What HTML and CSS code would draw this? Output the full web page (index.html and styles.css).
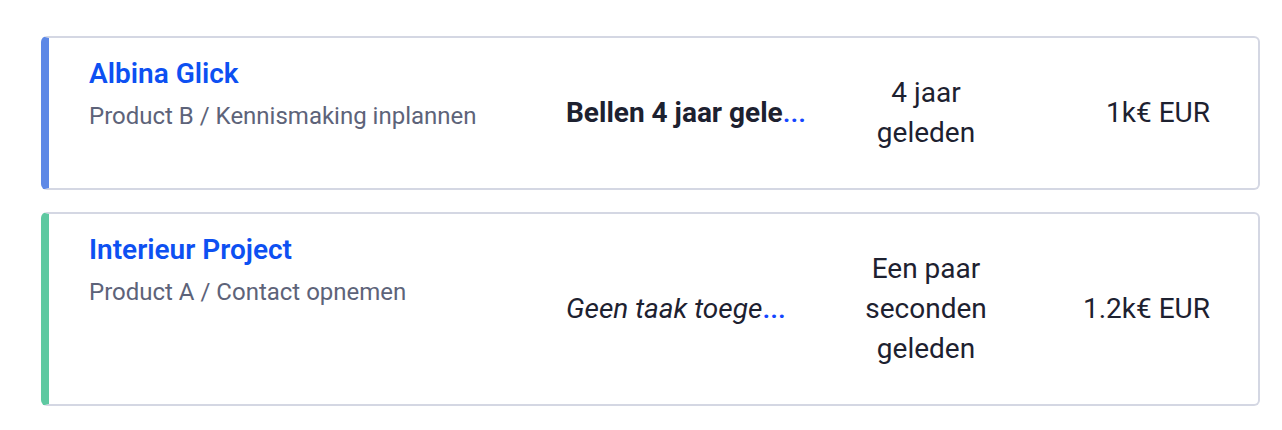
FILE: index.html
```html
<!DOCTYPE html>
<html lang="nl">
<head>
<meta charset="utf-8">
<link rel="stylesheet" href="styles.css">
</head>
<body>
<div class="list">
  <div class="card card-blue">
    <div class="info">
      <div class="title">Albina Glick</div>
      <div class="sub">Product B / Kennismaking inplannen</div>
    </div>
    <div class="task task-bold">Bellen 4 jaar gele<span class="more">...</span></div>
    <div class="time">4 jaar geleden</div>
    <div class="amount">1k€ EUR</div>
  </div>
  <div class="card card-green">
    <div class="info">
      <div class="title">Interieur Project</div>
      <div class="sub">Product A / Contact opnemen</div>
    </div>
    <div class="task task-italic">Geen taak toege<span class="more">...</span></div>
    <div class="time">Een paar seconden geleden</div>
    <div class="amount">1.2k€ EUR</div>
  </div>
</div>
</body>
</html>
```
FILE: styles.css
```css
* { box-sizing: border-box; }
html, body { margin: 0; background: #ffffff; }
body { font-family: Roboto, "Noto Sans", sans-serif; color: #1d2130; }

.list {
  padding: 36px 22px 0 41px;
  display: flex;
  flex-direction: column;
  gap: 22px;
}

.card {
  display: grid;
  grid-template-columns: 477px 280px 160px 1fr;
  align-items: center;
  padding: 14px 48px 14px 40px;
  border: 2px solid #d4d7e3;
  border-left-width: 8px;
  border-radius: 6px;
  background: #fff;
}
.card-blue { border-left-color: #5d88e6; }
.card-green { border-left-color: #5ec9a1; }

.info { align-self: start; padding-top: 2px; }
.title {
  font-size: 28px;
  font-weight: 600;
  line-height: 39px;
  color: #0d50f2;
}
.sub {
  margin-top: 5px;
  font-size: 24px;
  line-height: 36px;
  color: #5d6379;
}

.task {
  font-size: 28px;
  line-height: 40px;
  white-space: nowrap;
  color: #1d2130;
}
.task-bold { font-weight: 700; }
.task-italic { font-style: italic; }
.more { color: #1446ff; font-style: normal; font-weight: 500; }

.time {
  padding: 21px 0;
  font-size: 28px;
  line-height: 40px;
  text-align: center;
  color: #1d2130;
}

.amount {
  font-size: 28px;
  line-height: 40px;
  text-align: right;
  color: #1d2130;
}
```
